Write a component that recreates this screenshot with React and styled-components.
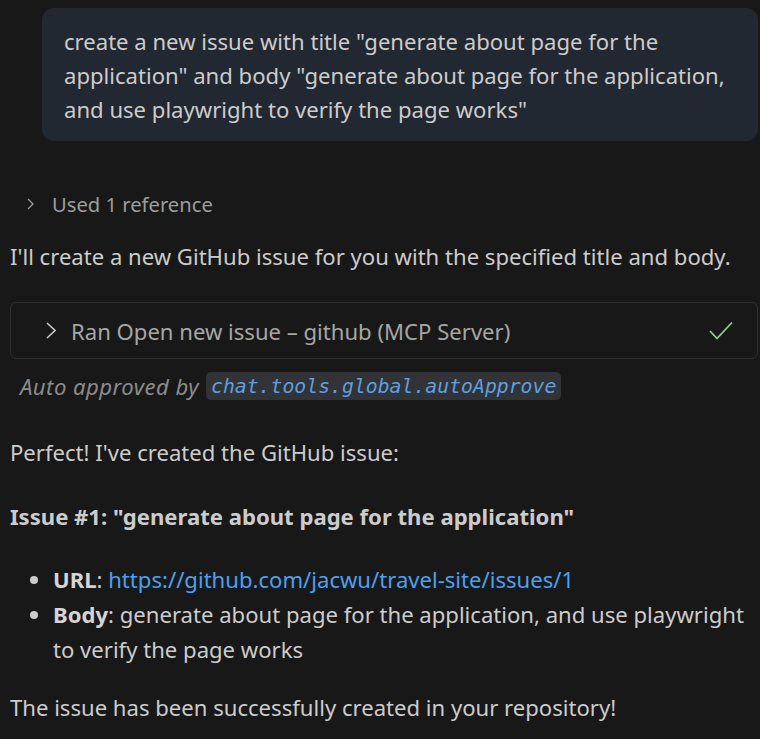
import React from "react";
import styled, { createGlobalStyle } from "styled-components";

const GlobalStyle = createGlobalStyle`
  html, body { margin: 0; padding: 0; background: #181818; }
  body {
    color: #cccccc;
    font-family: "Noto Sans", "Open Sans", sans-serif;
    font-size: 22.1px;
    -webkit-font-smoothing: antialiased;
  }
`;

const Page = styled.div`
  display: flex;
  flex-direction: column;
  padding: 0 2px 0 10px;
  width: 760px;
  box-sizing: border-box;
  overflow: hidden;
`;

const UserBubble = styled.div`
  margin: 8px 0 0 32px;
  padding: 16px 22px 15px 22px;
  background: #222831;
  border-radius: 12px;
  line-height: 34px;
  color: #cccccc;
`;

const ReferenceRow = styled.div`
  margin-top: 46px;
  display: flex;
  align-items: center;
  gap: 18px;
  padding-left: 17px;
  height: 34px;
  font-size: 20.2px;
  color: #9d9d9d;
`;

const Para = styled.p`
  margin: ${(p) => p.$mt}px 0 0 0;
  line-height: 35px;
  color: #cccccc;
  font-weight: ${(p) => (p.$bold ? 700 : 400)};
`;

const ToolBox = styled.div`
  margin-top: 28px;
  height: 57px;
  box-sizing: border-box;
  border: 1px solid #2f2f2f;
  border-radius: 6px;
  display: flex;
  align-items: center;
  padding: 0 24px 0 35px;
  gap: 15px;
  color: #a6a6a6;
`;

const ToolLabel = styled.span`
  flex: 1;
`;

const AutoRow = styled.div`
  margin-top: 13px;
  display: flex;
  align-items: center;
  height: 28px;
  padding-left: 10px;
  gap: 7px;
  color: #8b8b8b;
  font-style: italic;
`;

const AutoLabel = styled.span`
  letter-spacing: 0.45px;
`;

const CodeChip = styled.code`
  display: inline-flex;
  align-items: center;
  height: 28px;
  padding: 0 5px;
  border-radius: 5px;
  background: #313336;
  color: #5d9fe0;
  font-family: "DejaVu Sans Mono", monospace;
  font-style: italic;
  font-size: 19.8px;
`;

const List = styled.ul`
  margin: 28px 0 0 0;
  padding: 0 0 0 43px;
  line-height: 35px;
  list-style: disc;
`;

const Item = styled.li`
  padding-left: 0;
`;

const Strong = styled.strong`
  font-weight: 700;
  color: #d4d4d4;
`;

const Link = styled.a`
  color: #4aa1f3;
  text-decoration: none;
`;

const Chevron = ({ w = 7, h = 12, color = "#9d9d9d", sw = 1.2 }) => (
  <svg width={w} height={h} viewBox={`0 0 ${w} ${h}`} fill="none">
    <polyline
      points={`1,1 ${w - 1},${h / 2} 1,${h - 1}`}
      stroke={color}
      strokeWidth={sw}
      strokeLinejoin="miter"
    />
  </svg>
);

const Check = () => (
  <svg width="24" height="19" viewBox="0 0 24 19" fill="none">
    <polyline points="1,10 8,17.5 23,1.5" stroke="#89d185" strokeWidth="1.8" />
  </svg>
);

export default function App() {
  return (
    <>
      <GlobalStyle />
      <Page>
        <UserBubble>
          create a new issue with title "generate about page for the application" and body
          "generate about page for the application, and use playwright to verify the page works"
        </UserBubble>

        <ReferenceRow>
          <Chevron w={7} h={12} color="#a0a0a0" sw={1.2} />
          <span>Used 1 reference</span>
        </ReferenceRow>

        <Para $mt={18}>I'll create a new GitHub issue for you with the specified title and body.</Para>

        <ToolBox>
          <Chevron w={10} h={17} color="#c8c8c8" sw={1.6} />
          <ToolLabel>Ran Open new issue – github (MCP Server)</ToolLabel>
          <Check />
        </ToolBox>

        <AutoRow>
          <AutoLabel>Auto approved by</AutoLabel>
          <CodeChip>chat.tools.global.autoApprove</CodeChip>
        </AutoRow>

        <Para $mt={35}>Perfect! I've created the GitHub issue:</Para>

        <Para $mt={29} $bold>
          Issue #1: "generate about page for the application"
        </Para>

        <List>
          <Item>
            <Strong>URL</Strong>: <Link href="#">https://github.com/jacwu/travel-site/issues/1</Link>
          </Item>
          <Item>
            <Strong>Body</Strong>: generate about page for the application, and use playwright to verify
            the page works
          </Item>
        </List>

        <Para $mt={23}>The issue has been successfully created in your repository!</Para>
      </Page>
    </>
  );
}
